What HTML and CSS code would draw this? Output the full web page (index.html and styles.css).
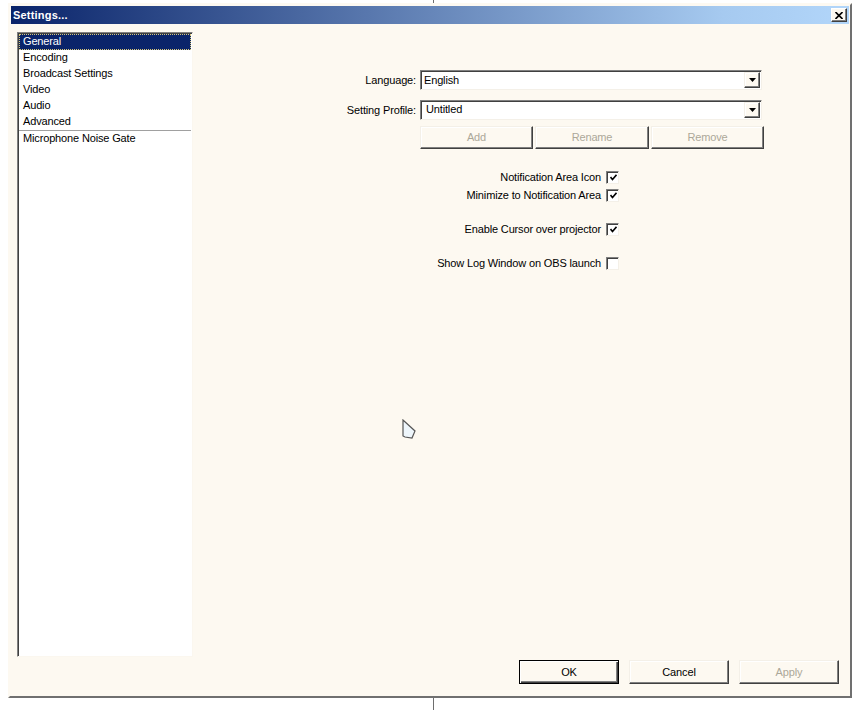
FILE: index.html
```html
<!DOCTYPE html>
<html lang="en">
<head>
  <meta charset="UTF-8">
  <title>Settings...</title>
  <link rel="stylesheet" href="styles.css">
</head>
<body>
  <div class="backdrop-line"></div>

  <div class="window">
    <div class="titlebar">
      <span class="title">Settings...</span>
      <button class="close-btn" aria-label="Close">
        <svg width="8" height="7" viewBox="0 0 8 7"><path d="M0.5 0 L7.5 7 M7.5 0 L0.5 7" stroke="#000" stroke-width="1.6"/></svg>
      </button>
    </div>

    <div class="main">
      <ul class="nav-list">
        <li class="selected">General</li>
        <li>Encoding</li>
        <li>Broadcast Settings</li>
        <li>Video</li>
        <li>Audio</li>
        <li>Advanced</li>
        <li class="separator">Microphone Noise Gate</li>
      </ul>

      <div class="panel">
        <div class="field-row">
          <label class="field-label">Language:</label>
          <div class="combo">
            <span class="combo-text">English</span>
            <span class="combo-btn"><svg width="7" height="4" viewBox="0 0 7 4"><path d="M0 0 H7 L3.5 4 Z" fill="#000"/></svg></span>
          </div>
        </div>
        <div class="field-row tight">
          <label class="field-label">Setting Profile:</label>
          <div class="combo">
            <span class="combo-text profile">Untitled</span>
            <span class="combo-btn"><svg width="7" height="4" viewBox="0 0 7 4"><path d="M0 0 H7 L3.5 4 Z" fill="#000"/></svg></span>
          </div>
        </div>
        <div class="profile-buttons">
          <button class="btn disabled">Add</button>
          <button class="btn disabled wide">Rename</button>
          <button class="btn disabled">Remove</button>
        </div>

        <div class="checks">
          <div class="check-row">
            <span>Notification Area Icon</span>
            <span class="checkbox"><svg width="7" height="7" viewBox="0 0 7 7"><path d="M0.5 3 L2.5 5.5 L6.5 0.8" fill="none" stroke="#000" stroke-width="1.6"/></svg></span>
          </div>
          <div class="check-row">
            <span>Minimize to Notification Area</span>
            <span class="checkbox"><svg width="7" height="7" viewBox="0 0 7 7"><path d="M0.5 3 L2.5 5.5 L6.5 0.8" fill="none" stroke="#000" stroke-width="1.6"/></svg></span>
          </div>
          <div class="check-row spaced">
            <span>Enable Cursor over projector</span>
            <span class="checkbox"><svg width="7" height="7" viewBox="0 0 7 7"><path d="M0.5 3 L2.5 5.5 L6.5 0.8" fill="none" stroke="#000" stroke-width="1.6"/></svg></span>
          </div>
          <div class="check-row spaced">
            <span>Show Log Window on OBS launch</span>
            <span class="checkbox"></span>
          </div>
        </div>
      </div>
    </div>

    <div class="footer">
      <button class="btn dialog default">OK</button>
      <button class="btn dialog">Cancel</button>
      <button class="btn dialog disabled">Apply</button>
    </div>
  </div>

  <!-- mouse pointer caught in the screenshot -->
  <svg class="cursor" width="16" height="22" viewBox="0 0 16 22">
    <path d="M1 1 L1 17 L3 18 L10 19 L13 12 Z" fill="#eef6fb" stroke="#555" stroke-width="1.2"/>
  </svg>
</body>
</html>
```

FILE: styles.css
```css
body {
    margin: 0;
    background-color: #ffffff;
    font-family: "Liberation Sans", Tahoma, Arial, sans-serif;
    font-size: 11px;
    letter-spacing: -0.15px;
    color: #000;
    position: relative;
    width: 865px;
    height: 710px;
    overflow: hidden;
}
.backdrop-line {
    position: absolute;
    left: 433px;
    top: 0;
    width: 1px;
    height: 710px;
    background-color: #6e6e6e;
}
.window {
    position: relative;
    box-sizing: border-box;
    width: 844px;
    height: 695px;
    margin: 3px 0 0 8px;
    padding: 1px;
    background-color: #fdf9f1;
    border: 2px solid;
    border-color: #fdf9f1 #707070 #707070 #fdf9f1;
    display: flex;
    flex-direction: column;
}
.titlebar {
    height: 18px;
    background: linear-gradient(to right, #0a246a, #a6caf0 85%, #b2d6fa);
    display: flex;
    align-items: center;
    justify-content: space-between;
    padding: 0 2px;
}
.title {
    color: #ffffff;
    font-weight: bold;
    font-size: 11px;
    letter-spacing: 0.2px;
}
.close-btn {
    box-sizing: border-box;
    width: 16px;
    height: 14px;
    padding: 0;
    background-color: #fdf9f1;
    border: 1px solid;
    border-color: #ffffff #404040 #404040 #ffffff;
    box-shadow: inset -1px -1px #808080;
    display: flex;
    align-items: center;
    justify-content: center;
}
.main {
    display: flex;
    padding: 8px 0 0 6px;
    height: 625px;
}
.nav-list {
    box-sizing: border-box;
    width: 176px;
    height: 625px;
    margin: 0;
    list-style: none;
    background-color: #ffffff;
    border: 1px solid;
    border-color: #808080 #fbf7ef #fbf7ef #808080;
    box-shadow: inset 1px 1px #404040;
    padding: 1px 1px 0 1px;
}
.nav-list li {
    box-sizing: border-box;
    height: 16px;
    line-height: 15px;
    padding-left: 4px;
    white-space: nowrap;
}
.nav-list li.selected {
    background-color: #0a246a;
    color: #ffffff;
    border: 1px dotted #d8c87a;
    line-height: 13px;
    padding-left: 3px;
}
.nav-list li.separator {
    height: 17px;
    border-top: 1px solid #a0a0a0;
}
.panel {
    flex: 1;
    padding-top: 38px;
}
.field-row {
    display: flex;
    align-items: center;
    height: 20px;
    margin-bottom: 10px;
}
.field-row.tight {
    margin-bottom: 6px;
}
.field-label {
    width: 223px;
    margin-right: 4px;
    text-align: right;
}
.combo {
    box-sizing: border-box;
    width: 342px;
    height: 20px;
    background-color: #ffffff;
    border: 1px solid;
    border-color: #808080 #f4f0e8 #f4f0e8 #808080;
    box-shadow: inset 1px 1px #404040;
    display: flex;
    align-items: center;
    justify-content: space-between;
    padding: 1px 1px 1px 2px;
}
.combo-text {
    padding-left: 1px;
}
.combo-text.profile {
    padding-left: 3px;
    margin-top: -3px;
}
.combo-btn {
    box-sizing: border-box;
    width: 16px;
    height: 16px;
    background-color: #fdf9f1;
    border: 1px solid;
    border-color: #f4f0e8 #404040 #404040 #f4f0e8;
    box-shadow: inset -1px -1px #808080, inset 1px 1px #ffffff;
    display: flex;
    align-items: center;
    justify-content: center;
    padding-bottom: 1px;
}
.profile-buttons {
    display: flex;
    gap: 2px;
    margin-left: 227px;
}
.btn {
    box-sizing: border-box;
    width: 113px;
    height: 24px;
    padding: 0;
    font-family: inherit;
    font-size: 11px;
    letter-spacing: inherit;
    color: #000;
    background-color: #fdf9f1;
    border: 1px solid;
    border-color: #f4f0e8 #404040 #404040 #f4f0e8;
    box-shadow: inset -1px -1px #808080, inset 1px 1px #ffffff;
}
.profile-buttons .btn {
    height: 23px;
    padding-bottom: 1px;
}
.btn.wide {
    width: 114px;
}
.btn.disabled {
    color: #aca899;
}
.checks {
    width: 426px;
    display: flex;
    flex-direction: column;
    align-items: flex-end;
    margin-top: 19px;
}
.check-row {
    height: 18px;
    display: flex;
    align-items: center;
    gap: 5px;
}
.check-row.spaced {
    margin-top: 16px;
}
.checkbox {
    box-sizing: border-box;
    width: 13px;
    height: 13px;
    background-color: #ffffff;
    border: 1px solid;
    border-color: #808080 #f4f0e8 #f4f0e8 #808080;
    box-shadow: inset 1px 1px #404040;
    display: flex;
    align-items: center;
    justify-content: center;
    padding: 1px 0 0 1px;
}
.footer {
    display: flex;
    justify-content: flex-end;
    gap: 10px;
    padding: 3px 10px 0 0;
}
.btn.dialog {
    width: 100px;
}
.btn.default {
    border-color: #000;
    box-shadow: inset 1px 1px #ffffff, inset -1px -1px #404040, inset -2px -2px #808080;
}
.cursor {
    position: absolute;
    left: 402px;
    top: 419px;
}
```
